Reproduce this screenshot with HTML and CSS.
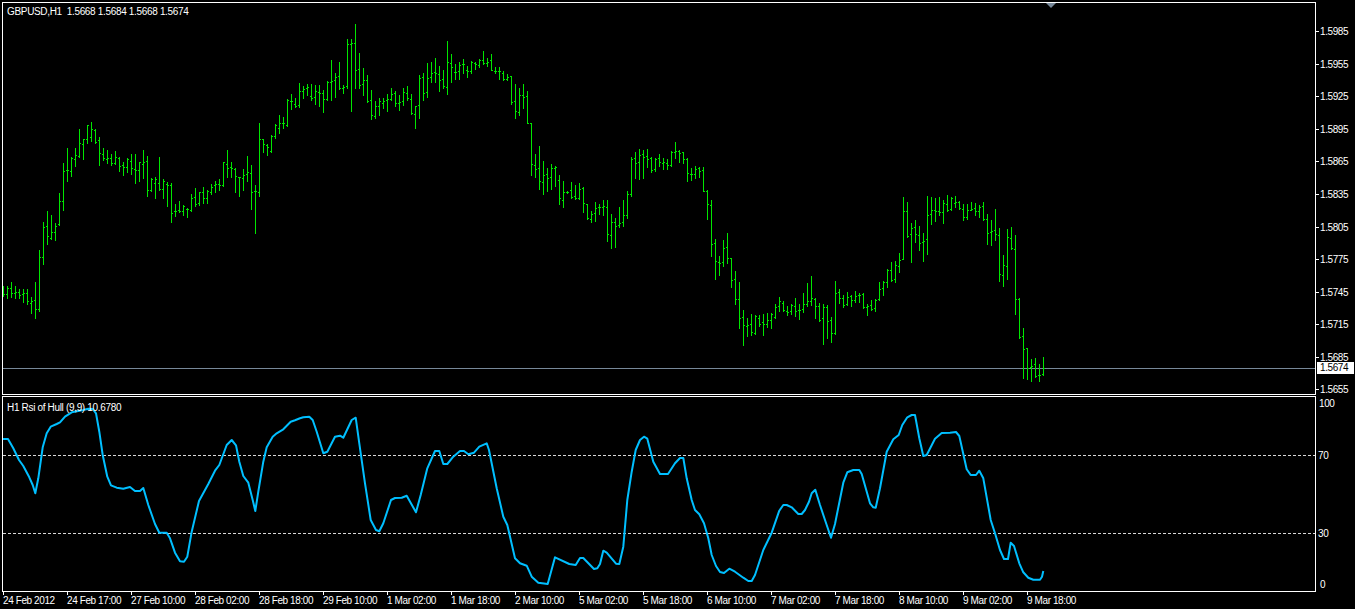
FILE: index.html
```html
<!DOCTYPE html>
<html lang="en">
<head>
<meta charset="utf-8">
<title>GBPUSD,H1</title>
<link rel="stylesheet" href="styles.css">
</head>
<body>
<div class="terminal">
  <section class="plot">
    <svg class="plot-svg" width="1312" height="391" viewBox="3 3 1312 391">
      <rect class="price-line" x="3" y="368" width="1312" height="1"></rect>
      <path id="bars" class="bars"></path>
      <polygon class="marker" points="1046,3 1056,3 1051,8"></polygon>
    </svg>
    <div class="plot-label price-label">GBPUSD,H1&nbsp; 1.5668 1.5684 1.5668 1.5674</div>
  </section>
  <aside class="axis price-axis">
    <div class="tick">1.5985</div>
    <div class="tick">1.5955</div>
    <div class="tick">1.5925</div>
    <div class="tick">1.5895</div>
    <div class="tick">1.5865</div>
    <div class="tick">1.5835</div>
    <div class="tick">1.5805</div>
    <div class="tick">1.5775</div>
    <div class="tick">1.5745</div>
    <div class="tick">1.5715</div>
    <div class="tick">1.5685</div>
    <div class="tick">1.5655</div>
    <div class="current-price">1.5674</div>
  </aside>
  <section class="plot">
    <svg class="plot-svg" width="1312" height="194" viewBox="3 397 1312 194">
      <line class="level" x1="3" y1="455.5" x2="1315" y2="455.5"></line>
      <line class="level" x1="3" y1="533.5" x2="1315" y2="533.5"></line>
      <polyline id="rsi" class="rsi"></polyline>
    </svg>
    <div class="plot-label rsi-label">H1 Rsi of Hull (9,9) 10.6780</div>
  </section>
  <aside class="axis rsi-axis">
    <div class="rsi-tick rsi-100">100</div>
    <div class="rsi-tick rsi-70">70</div>
    <div class="rsi-tick rsi-30">30</div>
    <div class="rsi-tick rsi-0">0</div>
  </aside>
  <footer class="time-axis">
    <div class="time">24 Feb 2012</div>
    <div class="time">24 Feb 17:00</div>
    <div class="time">27 Feb 10:00</div>
    <div class="time">28 Feb 02:00</div>
    <div class="time">28 Feb 18:00</div>
    <div class="time">29 Feb 10:00</div>
    <div class="time">1 Mar 02:00</div>
    <div class="time">1 Mar 18:00</div>
    <div class="time">2 Mar 10:00</div>
    <div class="time">5 Mar 02:00</div>
    <div class="time">5 Mar 18:00</div>
    <div class="time">6 Mar 10:00</div>
    <div class="time">7 Mar 02:00</div>
    <div class="time">7 Mar 18:00</div>
    <div class="time">8 Mar 10:00</div>
    <div class="time">9 Mar 02:00</div>
    <div class="time">9 Mar 18:00</div>
  </footer>
</div>
<script src="chart.js"></script>
</body>
</html>
```
FILE: styles.css
```css
html, body {
  margin: 0;
  height: 100%;
  background: #000;
  overflow: hidden;
}

.terminal {
  display: grid;
  grid-template-columns: 1314px 39px;
  grid-template-rows: 393px 196px 17px;
  row-gap: 1px;
  padding: 2px 0 0 2px;
  color: #fff;
  font: 10px/12px "Liberation Sans", Arial, sans-serif;
  letter-spacing: -0.4px;
}

.plot {
  position: relative;
  box-sizing: border-box;
  border: 1px solid #fff;
}

.plot-svg {
  display: block;
}

.plot-label {
  position: absolute;
  left: 4px;
  white-space: nowrap;
  letter-spacing: -0.33px;
}

.price-label {
  top: 3px;
}

.rsi-label {
  top: 5px;
}

.bars {
  fill: #00e600;
  shape-rendering: crispEdges;
}

.price-line {
  fill: #778899;
}

.marker {
  fill: #778899;
}

.level {
  stroke: #d8d8d8;
  stroke-width: 1;
  stroke-dasharray: 3 2;
  shape-rendering: crispEdges;
}

.rsi {
  fill: none;
  stroke: #00bfff;
  stroke-width: 2;
  stroke-linejoin: round;
}

.axis {
  position: relative;
}

.price-axis {
  padding-top: 13px;
}

.tick {
  position: relative;
  box-sizing: border-box;
  display: flex;
  align-items: center;
  height: 32.55px;
  padding: 2px 0 0 4px;
}

.tick::before {
  content: "";
  position: absolute;
  left: 0;
  top: 50%;
  width: 3px;
  height: 1px;
  background: #fff;
}

.current-price {
  position: absolute;
  left: 1px;
  top: 360px;
  width: 34px;
  height: 12px;
  padding-left: 3px;
  background: #fff;
  color: #000;
}

.rsi-axis {
  padding-top: 2px;
}

.rsi-tick {
  padding-left: 3px;
}

.rsi-100 {
  height: 52px;
}

.rsi-70 {
  height: 78px;
  padding-left: 2px;
}

.rsi-30 {
  height: 51px;
  padding-left: 2px;
}

.rsi-0 {
  padding-left: 4px;
}

.time-axis {
  grid-column: 1 / -1;
  display: flex;
  margin-top: -1px;
  padding-left: 1px;
}

.time {
  flex: none;
  width: 64px;
  white-space: nowrap;
  text-indent: -2px;
}

.time:first-child {
  text-indent: -1px;
}

.time::before {
  content: "";
  display: block;
  width: 1px;
  height: 3px;
  background: #fff;
  margin-left: 0;
}
```
FILE: chart.js
```js
var bars = [
[286,296,293,294],[286,298,294,288],[282,297,288,293],[286,298,293,292],[289,298,292,295],
[289,302,294,293],[289,304,293,301],[297,313,303,301],[282,318,300,309],[250,311,309,257],
[222,264,257,227],[211,244,226,236],[215,239,238,232],[223,240,232,226],[193,225,224,201],
[163,210,201,171],[148,181,170,170],[157,176,171,158],[148,166,159,155],[129,157,156,143],
[139,159,144,139],[125,143,139,125],[122,141,137,129],[129,143,130,142],[137,165,140,153],
[148,160,154,158],[150,163,159,158],[154,165,158,163],[151,164,163,157],[157,171,158,166],
[162,175,165,167],[158,172,167,159],[154,174,161,168],[154,183,169,170],[162,181,170,162],
[150,178,164,162],[156,196,161,190],[178,191,190,179],[177,198,183,179],[157,190,183,189],
[179,198,189,181],[182,206,184,185],[183,222,185,213],[204,216,211,211],[201,212,210,211],
[205,215,211,206],[208,217,209,209],[194,211,210,198],[188,206,197,204],[192,205,203,192],
[187,203,192,198],[190,203,198,191],[184,194,192,187],[181,192,185,184],[179,190,184,185],
[162,186,185,162],[150,177,164,168],[162,177,167,168],[168,192,169,176],[177,196,177,177],
[169,190,178,175],[156,181,174,172],[165,209,173,192],[185,233,191,191],[123,196,192,139],
[139,152,139,144],[144,155,145,147],[135,152,151,136],[124,138,136,125],[115,133,128,123],
[117,128,123,123],[99,126,125,100],[94,109,101,101],[98,107,104,106],[83,107,105,91],
[86,98,91,89],[84,95,88,87],[84,100,96,98],[85,104,97,91],[85,106,92,93],
[90,112,93,99],[81,100,99,82],[60,100,82,81],[73,97,80,77],[62,89,76,88],
[85,93,88,87],[39,88,86,44],[39,111,44,43],[24,88,43,70],[53,88,69,85],
[68,95,84,80],[75,102,80,101],[90,119,100,115],[101,118,116,106],[98,115,106,101],
[98,108,103,101],[94,111,100,99],[88,100,99,94],[91,106,93,103],[95,110,103,102],
[88,105,101,92],[86,100,93,98],[94,114,99,113],[106,128,114,106],[75,118,105,78],
[73,100,77,93],[63,97,92,78],[62,82,77,73],[58,82,72,73],[66,91,74,80],
[70,88,79,86],[41,94,87,62],[54,82,63,67],[64,79,72,72],[62,79,71,65],
[59,73,64,64],[66,77,70,71],[61,73,71,62],[62,69,63,64],[59,67,65,60],
[51,64,60,63],[58,66,63,62],[54,70,60,70],[67,73,71,71],[67,79,71,71],
[71,80,73,79],[74,80,79,77],[76,104,76,102],[84,118,101,111],[88,115,112,95],
[84,108,95,97],[91,123,96,123],[123,175,123,164],[154,177,165,169],[146,189,168,181],
[161,194,182,175],[168,191,174,178],[164,189,177,168],[166,186,168,167],[175,204,180,198],
[181,207,200,192],[191,193,192,192],[182,198,190,197],[185,199,196,198],[183,199,198,189],
[187,212,188,203],[204,219,204,218],[211,222,219,214],[202,221,213,208],[204,214,207,207],
[200,215,207,206],[200,241,207,234],[214,248,235,222],[218,247,222,226],[207,227,225,223],
[200,226,222,215],[191,218,215,194],[157,196,194,159],[152,178,158,163],[149,179,162,155],
[150,178,154,157],[149,167,156,159],[157,172,158,170],[158,171,169,159],[154,166,158,162],
[158,169,163,162],[159,169,163,165],[151,166,165,152],[142,158,152,151],[150,162,151,153],
[152,163,152,159],[158,181,159,173],[168,180,174,174],[166,178,174,169],[167,177,168,171],
[167,191,170,191],[190,219,191,204],[200,256,205,244],[239,279,243,261],[256,275,262,263],
[240,266,262,248],[233,263,247,258],[258,287,258,280],[271,304,279,299],[282,328,299,318],
[310,345,317,325],[318,336,326,325],[314,335,324,332],[315,334,333,316],[315,326,318,324],
[314,335,322,324],[313,327,324,320],[313,328,320,314],[304,318,317,307],[297,311,306,301],
[301,311,303,310],[306,315,311,312],[304,314,311,305],[298,316,306,311],[304,319,310,310],
[293,312,309,304],[283,306,304,301],[276,305,301,298],[298,318,299,306],[303,321,306,320],
[304,344,318,307],[305,338,307,321],[317,342,320,333],[281,334,333,293],[289,303,292,298],
[295,307,298,305],[292,305,304,297],[295,306,296,300],[291,302,300,296],[293,302,295,295],
[293,308,294,307],[304,315,307,306],[300,310,305,309],[299,311,308,300],[282,300,299,289],
[281,295,288,282],[269,287,282,270],[262,281,270,280],[261,282,279,265],[253,272,266,260],
[197,259,259,211],[202,237,211,236],[223,262,234,228],[220,242,227,234],[226,250,235,243],
[233,261,242,241],[196,254,239,215],[197,224,214,210],[198,221,210,211],[197,215,211,212],
[200,223,212,203],[195,211,204,210],[197,210,209,198],[196,207,203,202],[201,209,202,208],
[204,220,209,217],[204,219,217,210],[202,210,210,209],[203,215,208,211],[205,217,211,207],
[202,220,206,219],[214,244,219,233],[220,245,232,231],[209,240,230,234],[228,281,235,274],
[255,286,275,265],[229,279,266,237],[227,249,238,248],[235,314,249,299],[298,338,299,337],
[328,378,336,349],[348,379,348,368],[359,381,367,366],[358,377,364,376],[364,381,375,375],
[357,375,374,368]
];

var d = "";
bars.forEach(function (b, i) {
  var x = 3 + 4 * i;
  d += "M" + x + " " + b[0] + "h1V" + (b[1] + 1) + "h-1z";
  d += "M" + (x - 1) + " " + b[2] + "h1v1h-1z";
  d += "M" + (x + 1) + " " + b[3] + "h1v1h-1z";
});
document.getElementById("bars").setAttribute("d", d);

var segments = [
  [0, 360, [8,237,24,237,40,265,57,300,70,318,88,352,98,375,106,400,115,355,128,262,140,220,152,200,170,192,180,187,195,170,215,157,235,153,250,150,265,146,278,147,288,160,298,215,308,285,322,350,333,376,350,383,370,386,390,381,405,393,420,393,430,384,445,435,465,492,478,518,500,518,510,535,525,578,540,604,552,605,562,590,575,515,597,423,625,372,645,332,658,315,680,255,695,240,708,256,718,305,730,348,745,368,758,420,766,453,775,395,790,305,800,262,818,230,830,220,850,208,872,185,885,181]],
  [290, 400, [30,55,40,52,58,50,68,60,80,95,100,160,112,155,135,110,150,107,160,113,185,60,197,53,208,130,225,250,242,360,258,390,268,394,280,370,303,300,315,294,335,293,350,287,378,337,392,285,412,205,435,153,448,153,460,192,472,192,490,170,510,153,522,153,535,163,552,158,568,140,590,130,597,150,620,265,640,350,652,375,675,475,690,490,710,497,725,530,745,548,773,552,795,472,838,492,857,495,870,474,880,474,912,507,922,505,930,492,940,452,950,458,978,491,988,492,1000,440,1012,300,1025,215,1037,150,1050,120,1062,110,1072,116,1090,185,1110,222]],
  [660, 400, [24,222,45,190,60,174,70,174,80,235,95,300,105,330,118,343,132,370,145,415,155,465,168,498,180,516,192,519,208,506,225,515,250,533,265,543,275,543,285,525,310,450,335,398,358,332,370,315,380,315,395,322,415,342,425,342,435,330,447,305,455,280,466,269,480,315,495,360,513,413,525,372,550,248,562,217,580,210,598,210,605,222,630,310,640,322,647,323,660,265,680,155,700,118,716,105,727,75,742,52,755,45,765,45,778,115,790,168,800,165,825,116,845,99,870,98,888,96,898,108,920,208,932,225,948,225,958,212,970,235,992,360,1005,400,1020,450,1032,477,1044,477,1052,428,1062,438,1078,490,1090,517,1105,533,1120,539,1140,539,1146,530,1150,513]]
];

var points = [];
segments.forEach(function (s) {
  for (var i = 0; i < s[2].length; i += 2) {
    points.push((s[0] + s[2][i] / 3).toFixed(1) + "," + (s[1] + s[2][i + 1] / 3).toFixed(1));
  }
});
document.getElementById("rsi").setAttribute("points", points.join(" "));
```
